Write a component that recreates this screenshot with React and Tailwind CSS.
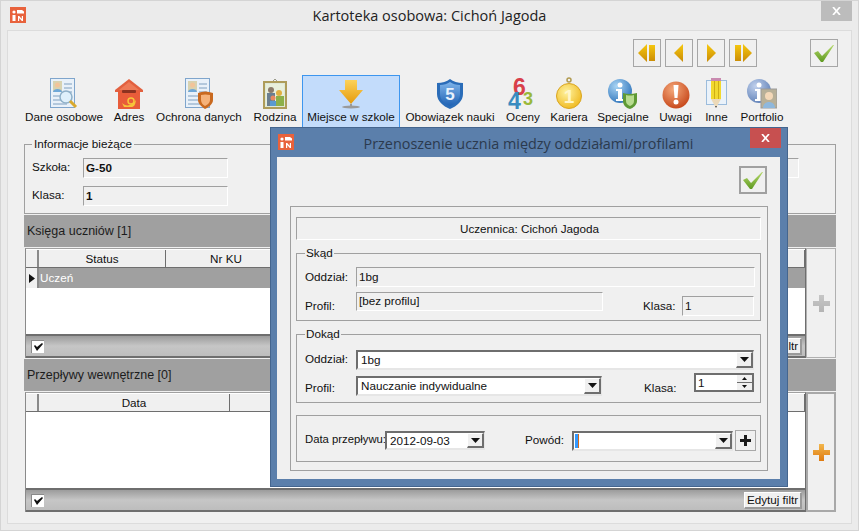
const AppIcon = () => (
  <svg width="16" height="16" viewBox="0 0 16 16" className="shrink-0">
    <rect width="16" height="16" fill="#e8623c" />
    <circle cx="4" cy="5" r="1.6" fill="#fff" />
    <rect x="2.5" y="8" width="3" height="6" fill="#fff" />
    <path d="M7 3h5l2 1.5v2H7z" fill="#fff" />
    <path d="M8 9h1.2l2.6 3V9H13v5h-1.2L9.2 11v3H8z" fill="#fff" />
  </svg>
);

const Caret = () => (
  <svg width="9" height="5" viewBox="0 0 9 5"><path d="M0 0h9L4.500 5z" fill="#111" /></svg>
);

const Check = ({ id }) => (
  <svg width="20" height="17" viewBox="0 0 20 17">
    <defs>
      <linearGradient id={id} x1="0" y1="0" x2="0" y2="1">
        <stop offset="0" stopColor="#b5d96a" />
        <stop offset="1" stopColor="#5f9a22" />
      </linearGradient>
    </defs>
    <path d="M0 8l4-2 4 5L19 0h1L9 17H7z" fill={`url(#${id})`} />
  </svg>
);

const Nav = ({ dir }) => (
  <button className="w-[28px] h-[28px] border border-[#a6a6a6] flex items-center justify-center">
    <svg width="18" height="18" viewBox="0 0 18 18">
      <defs>
        <linearGradient id={`nav${dir}`} x1="0" y1="0" x2="0" y2="1">
          <stop offset="0" stopColor="#f7c90f" />
          <stop offset="1" stopColor="#c98a05" />
        </linearGradient>
      </defs>
      {dir === "first" && <path d="M0 9l9-9v18zM11 1h6v16h-6z" fill="url(#navfirst)" />}
      {dir === "prev" && <path d="M4 9l9-9v18z" fill="url(#navprev)" />}
      {dir === "next" && <path d="M5 0l9 9-9 9z" fill="url(#navnext)" />}
      {dir === "last" && <path d="M1 1h6v16H1zM9 0l9 9-9 9z" fill="url(#navlast)" />}
    </svg>
  </button>
);

const Card = () => (
  <g>
    <rect x="0.500" y="0.500" width="24" height="29" fill="#e9f1f9" stroke="#7fa5cc" />
    <rect x="3" y="3" width="9" height="11" fill="#d8d2b0" />
    <circle cx="7.500" cy="7" r="2.500" fill="#f2c49a" />
    <path d="M3 14c0-4 9-4 9 0z" fill="#6fa8d8" />
    <path d="M14 6h8M14 10h8M14 14h8M3 18h19M3 22h14M3 26h14" stroke="#7f9fbf" />
  </g>
);

const DaneIcon = () => (
  <svg width="28" height="31" viewBox="0 0 28 31">
    <Card />
    <circle cx="16" cy="19" r="6" fill="#dff0fb" stroke="#8fb0c8" strokeWidth="1.500" />
    <path d="M20 23l6 6" stroke="#d9a92e" strokeWidth="3" />
  </svg>
);

const AdresIcon = () => (
  <svg width="28" height="30" viewBox="0 0 28 30">
    <path d="M14 0L28 11v2H0v-2z" fill="#e2603f" />
    <path d="M14 3L24 11H4z" fill="#ee7a57" />
    <rect x="3" y="12" width="22" height="18" fill="#e85c3a" />
    <rect x="7" y="11" width="14" height="3" rx="1" fill="#8c3220" />
    <path d="M7 24c4 4 10 3 14-3-1 6-2 7-5 7H9z" fill="#f7c53a" />
    <circle cx="16" cy="22" r="3" fill="none" stroke="#f7c53a" strokeWidth="1.500" />
  </svg>
);

const OchronaIcon = () => (
  <svg width="29" height="31" viewBox="0 0 29 31">
    <Card />
    <path d="M13 15q7-3 15 0v7c0 4-4 7-8 9-3-2-7-5-7-9z" fill="#c9691f" />
    <path d="M16 17q4-1 9 0v5c0 3-3 5-5 6-2-1-4-3-4-6z" fill="#f5b27a" />
  </svg>
);

const RodzinaIcon = () => (
  <svg width="24" height="31" viewBox="0 0 24 31">
    <path d="M9 4l3-3 3 3" fill="none" stroke="#9a9a8a" />
    <rect x="1" y="4" width="22" height="26" fill="#dfe8d5" stroke="#ae9c5a" strokeWidth="2" />
    <rect x="3" y="6" width="18" height="22" fill="#e8efdc" />
    <circle cx="8" cy="12" r="3" fill="#8b7a6a" />
    <rect x="4" y="15" width="8" height="13" fill="#6b7f90" />
    <circle cx="16" cy="15" r="3" fill="#e0b040" />
    <rect x="13" y="18" width="8" height="10" fill="#8cb04a" />
    <circle cx="10" cy="20" r="2.500" fill="#e88a60" />
    <rect x="7" y="23" width="6" height="5" fill="#5a9ad0" />
  </svg>
);

const ArrowIcon = () => (
  <svg width="24" height="29" viewBox="0 0 24 29">
    <defs>
      <linearGradient id="arrowG" x1="0" y1="0" x2="0" y2="1">
        <stop offset="0" stopColor="#fcd25a" />
        <stop offset="1" stopColor="#e59a0c" />
      </linearGradient>
    </defs>
    <path d="M6 0h12v10h6L12 24 0 10h6z" fill="url(#arrowG)" />
    <path d="M11 24h2v2h-2z" fill="#9a9a9a" />
    <ellipse cx="12" cy="27" rx="9" ry="1.500" fill="#9a9a9a" />
  </svg>
);

const ShieldIcon = () => (
  <svg width="26" height="30" viewBox="0 0 26 30">
    <defs>
      <linearGradient id="shieldG" x1="0" y1="0" x2="0" y2="1">
        <stop offset="0" stopColor="#7fb4ea" />
        <stop offset="1" stopColor="#1f62b4" />
      </linearGradient>
    </defs>
    <path d="M13 0q5 4 13 4v11c0 7-6 12-13 15C6 27 0 22 0 15V4q8 0 13-4z" fill="#2a6cb8" />
    <path d="M13 3q4 3 10 3v9c0 6-5 10-10 12C8 25 3 21 3 15V6q6 0 10-3z" fill="url(#shieldG)" />
    <text x="13" y="21" textAnchor="middle" className="font-['Liberation_Sans',sans-serif] font-bold text-[17px]" fill="#e8f2fc">5</text>
  </svg>
);

const OcenyIcon = () => (
  <svg width="30" height="31" viewBox="0 0 30 31" className="font-['Liberation_Sans',sans-serif] font-bold overflow-visible">
    <text x="5" y="17" className="text-[23px]" fill="#d8404a">6</text>
    <text x="0" y="31" className="text-[23px]" fill="#3a8cc0">4</text>
    <text x="15" y="27" className="text-[18px]" fill="#9ab83a">3</text>
  </svg>
);

const KarieraIcon = () => (
  <svg width="26" height="32" viewBox="0 0 26 32">
    <defs>
      <radialGradient id="medalG" cx="0.400" cy="0.350" r="0.750">
        <stop offset="0" stopColor="#fff3a0" />
        <stop offset="1" stopColor="#eeb414" />
      </radialGradient>
    </defs>
    <circle cx="13" cy="3" r="2" fill="none" stroke="#b09a50" strokeWidth="1.500" />
    <circle cx="13" cy="19" r="12.500" fill="url(#medalG)" stroke="#d9a520" />
    <text x="13" y="26" textAnchor="middle" className="font-['Liberation_Sans',sans-serif] font-bold text-[19px]" fill="#fff6c8">1</text>
  </svg>
);

const InfoBall = ({ id, a, b }) => (
  <g>
    <defs>
      <radialGradient id={id} cx="0.350" cy="0.300" r="0.800">
        <stop offset="0" stopColor={a} />
        <stop offset="1" stopColor={b} />
      </radialGradient>
    </defs>
    <circle cx="12" cy="12" r="12" fill={`url(#${id})`} />
    <circle cx="12" cy="6" r="2.500" fill="#fff" />
    <path d="M8 10h6v10h2v2H8v-2h2v-8H8z" fill="#fff" />
  </g>
);

const SpecjalneIcon = () => (
  <svg width="30" height="30" viewBox="0 0 30 30">
    <InfoBall id="specG" a="#a8d4f4" b="#2a70b8" />
    <path d="M15 14q6 2 14 0v8c0 4-4 7-7 8-4-1-7-4-7-8z" fill="#5f9a35" />
    <path d="M18 16q4 1 8 0v6c0 3-2 4-4 5-2-1-4-2-4-5z" fill="#b8dc90" />
  </svg>
);

const UwagiIcon = () => (
  <svg width="28" height="28" viewBox="0 0 28 28">
    <defs>
      <radialGradient id="uwagiG" cx="0.400" cy="0.300" r="0.800">
        <stop offset="0" stopColor="#f4a87a" />
        <stop offset="1" stopColor="#c23d10" />
      </radialGradient>
    </defs>
    <circle cx="14" cy="14" r="13.500" fill="url(#uwagiG)" />
    <path d="M11.500 4h5l-1 13h-3z" fill="#fff" />
    <circle cx="14" cy="21" r="2.500" fill="#fff" />
  </svg>
);

const InneIcon = () => (
  <svg width="21" height="31" viewBox="0 0 21 31">
    <rect x="0.500" y="2.500" width="20" height="24" fill="#eaf2fa" stroke="#9cbcdc" />
    <rect x="5" y="0" width="10" height="3" fill="#c98ab0" />
    <rect x="5" y="3" width="10" height="18" fill="#f2d92e" />
    <path d="M8 3h1v18H8zM12 3h1v18h-1z" fill="#cfae14" />
    <path d="M5 21h10l-5 9z" fill="#ecd9b8" />
    <path d="M9 28h2l-1 2z" fill="#444" />
  </svg>
);

const PortfolioIcon = () => (
  <svg width="30" height="30" viewBox="0 0 30 30">
    <InfoBall id="portG" a="#c0d0ec" b="#5a7cb4" />
    <rect x="14" y="10" width="16" height="19" fill="#b8b098" stroke="#9a9a9a" />
    <circle cx="22" cy="17" r="4" fill="#f4d8b8" />
    <path d="M16 29c0-8 12-8 12 0z" fill="#8fb8dc" />
  </svg>
);

const tools = [
  { label: "Dane osobowe", w: "w-[88px]", icon: <DaneIcon /> },
  { label: "Adres", w: "w-[40px]", icon: <AdresIcon /> },
  { label: "Ochrona danych", w: "w-[98px]", icon: <OchronaIcon /> },
  { label: "Rodzina", w: "w-[52px]", icon: <RodzinaIcon /> },
  { label: "Miejsce w szkole", w: "w-[98px]", icon: <ArrowIcon />, active: true },
  { label: "Obowiązek nauki", w: "w-[98px]", icon: <ShieldIcon /> },
  { label: "Oceny", w: "w-[46px]", icon: <OcenyIcon /> },
  { label: "Kariera", w: "w-[44px]", icon: <KarieraIcon /> },
  { label: "Specjalne", w: "w-[62px]", icon: <SpecjalneIcon /> },
  { label: "Uwagi", w: "w-[41px]", icon: <UwagiIcon /> },
  { label: "Inne", w: "w-[39px]", icon: <InneIcon /> },
  { label: "Portfolio", w: "w-[50px]", icon: <PortfolioIcon /> },
];

const Sunken = ({ className = "", children }) => (
  <div className={`border border-t-[#a0a0a0] border-l-[#a0a0a0] border-r-white border-b-white flex items-center pl-[2px] ${className}`}>
    {children}
  </div>
);

const Group = ({ title, className = "", children }) => (
  <fieldset className={`border border-[#a0a0a0] ${className}`}>
    <legend className="px-[1px] leading-[14px]">{title}</legend>
    {children}
  </fieldset>
);

const DropButton = ({ className = "" }) => (
  <span className={`bg-[#f0f0f0] border-t border-t-white border-l border-l-white border-r-2 border-r-[#6e6e6e] border-b-2 border-b-[#6e6e6e] flex items-center justify-center ${className}`}>
    <Caret />
  </span>
);

const Combo = ({ value, className = "" }) => (
  <div className={`bg-white border-t-2 border-l-2 border-t-[#6e6e6e] border-l-[#6e6e6e] border-r border-b-2 border-r-[#e6e6e6] border-b-[#e6e6e6] flex items-stretch ${className}`}>
    <span className="flex-1 pl-[3px] leading-[16px] flex items-center">{value}</span>
    <DropButton className="w-[17px]" />
  </div>
);

const GridCheck = () => (
  <span className="w-[13px] h-[13px] bg-white border-t border-l border-t-[#8a8a8a] border-l-[#8a8a8a] flex items-center justify-center">
    <svg width="9" height="8" viewBox="0 0 9 8"><path d="M0 3l1-1 2 2 5-4 1 1-6 7z" fill="#111" /></svg>
  </span>
);

const GridHead = ({ children }) => (
  <div className="flex h-[19px] bg-[#f0f0f0] border-b border-b-[#6e6e6e] shrink-0 border-t border-t-white">
    <span className="w-[13px] border-r-2 border-r-[#8a8a8a] shrink-0" />
    {children}
  </div>
);

const Grid = ({ head, row, filterText = "Edytuj filtr" }) => (
  <div className="w-[782px] ml-px border-l border-l-[#8a8a8a] border-r border-r-[#6e6e6e] flex flex-col h-full border-t border-t-[#a0a0a0]">
    <GridHead>{head}</GridHead>
    <div className="flex-1 bg-white">{row}</div>
    <div className="h-[24px] shrink-0 border-t-2 border-b-2 border-t-[#6e6e6e] border-b-[#6e6e6e] bg-linear-to-b from-[#9c9c9c] via-[#c6c6c6] to-[#bdbdbd] flex items-center justify-between pl-[5px] pr-[3px]">
      <GridCheck />
      <button className="w-[58px] h-[17px] bg-[#f0f0f0] border-t border-l border-t-white border-l-white border-r-2 border-b-2 border-r-[#9a9a9a] border-b-[#9a9a9a] leading-[13px] whitespace-nowrap">
        {filterText}
      </button>
    </div>
  </div>
);

const AddButton = ({ className = "", children }) => (
  <button className={`w-[30px] flex items-center justify-center ${className}`}>{children}</button>
);

const PlusIcon = ({ from, to, id }) => (
  <svg width="17" height="17" viewBox="0 0 17 17">
    <defs>
      <linearGradient id={id} x1="0" y1="0" x2="0" y2="1">
        <stop offset="0" stopColor={from} />
        <stop offset="1" stopColor={to} />
      </linearGradient>
    </defs>
    <path d="M6 0h5v6h6v5h-6v6H6v-6H0V6h6z" fill={`url(#${id})`} />
  </svg>
);

const SectionHeader = ({ children }) => (
  <div className="mt-px ml-[16px] w-[812px] h-[32px] bg-[#a0a0a0] flex items-center pl-[3px] text-[12.500px] text-[#1c1c1c]">
    {children}
  </div>
);

const Dialog = () => (
  <div className="absolute left-[269px] top-[126px] w-[518px] h-[360px] bg-[#5b7fab] border border-[#44658e] flex flex-col">
    <div className="h-[29px] shrink-0 flex items-start pl-[7px] pt-[1px] relative">
      <span className="mt-[5px]"><AppIcon /></span>
      <span className="flex-1 text-center font-['Open_Sans',sans-serif] text-[14.400px] leading-[29px] text-[#2b3a4e] pr-[24px] pl-0">
        Przenoszenie ucznia między oddziałami/profilami
      </span>
      <span className="absolute right-[6px] top-0 w-[31px] h-[20px] bg-[#c75050] flex items-center justify-center">
        <svg width="9" height="8" viewBox="0 0 9 8"><path d="M1 0l7 8M8 0L1 8" stroke="#fff" strokeWidth="1.700" /></svg>
      </span>
    </div>
    <div className="mx-[6px] w-[503px] h-[322px] bg-[#f0f0f0] flex flex-col">
      <div className="flex justify-end pt-[9px] pr-[13px]">
        <button className="w-[28px] h-[28px] border-2 border-[#a0a0a0] flex items-center justify-center">
          <Check id="checkDialog" />
        </button>
      </div>
      <div className="mt-[12px] ml-[13px] w-[478px] h-[265px] border border-[#a0a0a0] pl-[5px] pt-[10px]">
        <Sunken className="w-[465px] h-[23px] justify-center">Uczennica: Cichoń Jagoda</Sunken>

        <Group title="Skąd" className="mt-[6px] w-[465px] h-[75px] pl-[8px]">
          <div className="pt-[7px] flex items-center">
            <span className="w-[51px] shrink-0">Oddział:</span>
            <Sunken className="w-[399px] h-[20px]">1bg</Sunken>
          </div>
          <div className="mt-[5px] flex items-start">
            <span className="w-[51px] shrink-0 mt-[5px]">Profil:</span>
            <Sunken className="w-[247px] h-[19px] !items-start leading-[16px]">[bez profilu]</Sunken>
            <span className="ml-[40px] w-[39px] mt-[5px]">Klasa:</span>
            <Sunken className="mt-[4px] w-[72px] h-[20px]">1</Sunken>
          </div>
        </Group>

        <Group title="Dokąd" className="mt-[6px] w-[465px] h-[76px] pl-[8px]">
          <div className="pt-[9px] flex items-center">
            <span className="w-[51px] shrink-0 -mt-[2px]">Oddział:</span>
            <Combo value="1bg" className="w-[398px] h-[20px]" />
          </div>
          <div className="mt-[3px] flex items-start">
            <span className="w-[51px] shrink-0 mt-[6px]">Profil:</span>
            <Combo value="Nauczanie indywidualne" className="mt-[3px] w-[246px] h-[20px]" />
            <span className="ml-[42px] w-[50px] mt-[6px]">Klasa:</span>
            <div className="w-[60px] h-[19px] bg-white border-2 border-[#6e6e6e] flex items-stretch">
              <span className="flex-1 pl-[2px] leading-[15px]">1</span>
              <span className="w-[15px] flex flex-col bg-[#f0f0f0]">
                <span className="flex-1 flex items-center justify-center border-b border-b-[#6e6e6e]">
                  <svg width="5" height="3" viewBox="0 0 5 3"><path d="M2.500 0L5 3H0z" fill="#111" /></svg>
                </span>
                <span className="flex-1 flex items-center justify-center">
                  <svg width="5" height="3" viewBox="0 0 5 3"><path d="M0 0h5L2.500 3z" fill="#111" /></svg>
                </span>
              </span>
            </div>
          </div>
        </Group>

        <div className="mt-[12px] w-[465px] h-[47px] border border-[#a0a0a0] pl-[8px] pt-[15px] flex items-start">
          <span className="w-[80px] shrink-0 whitespace-nowrap text-[11.300px]">Data przepływu:</span>
          <Combo value="2012-09-03" className="w-[100px] h-[19px]" />
          <span className="ml-[40px] w-[47px] shrink-0">Powód:</span>
          <div className="w-[161px] h-[20px] bg-white border-t-2 border-l-2 border-t-[#6e6e6e] border-l-[#6e6e6e] border-r border-b-2 border-r-[#e6e6e6] border-b-[#e6e6e6] flex items-stretch">
            <span className="flex-1 pl-[1px] flex items-center">
              <span className="w-[4px] h-[14px] bg-[#3399ff] border-r border-r-[#d2691e]" />
            </span>
            <DropButton className="w-[17px]" />
          </div>
          <button className="ml-[2px] -mt-[1px] w-[21px] h-[21px] border border-[#a8a8a8] flex items-center justify-center">
            <svg width="11" height="11" viewBox="0 0 11 11"><path d="M4 0h3v4h4v3H7v4H4V7H0V4h4z" fill="#1a1a1a" /></svg>
          </button>
        </div>
      </div>
    </div>
  </div>
);

const App = () => (
  <div className="w-[859px] h-[531px] relative overflow-hidden bg-[#ebebeb] border border-[#d4d4d4] font-['Liberation_Sans',sans-serif] text-[11.700px] text-[#111]">
    <div className="h-[29px] flex items-start relative">
      <span className="ml-[9px] mt-[6px]"><AppIcon /></span>
      <span className="absolute inset-x-0 top-0 text-center font-['Open_Sans',sans-serif] text-[14.500px] leading-[30px] text-[#222]">
        Kartoteka osobowa: Cichoń Jagoda
      </span>
      <span className="absolute right-[6px] top-0 w-[31px] h-[20px] bg-[#bcbcbc] flex items-center justify-center">
        <svg width="9" height="8" viewBox="0 0 9 8"><path d="M1 0l7 8M8 0L1 8" stroke="#fff" strokeWidth="1.700" /></svg>
      </span>
    </div>

    <div className="ml-[6px] w-[845px] h-[494px] border border-[#dcdcdc] bg-[#f0f0f0]">
      <div className="flex items-center justify-end gap-[4px] pt-[8px] pr-[13px]">
        <Nav dir="first" />
        <Nav dir="prev" />
        <Nav dir="next" />
        <Nav dir="last" />
        <button className="ml-[49px] w-[28px] h-[28px] border border-[#a6a6a6] flex items-center justify-center">
          <Check id="checkMain" />
        </button>
      </div>

      <div className="mt-[8px] pl-[12px] h-[55px] flex gap-px">
        {tools.map((t) => (
          <div
            key={t.label}
            className={`${t.w} shrink-0 flex flex-col items-center ${t.active ? "bg-[#c3dcfb] border border-[#3d96ef]" : "border border-transparent"}`}
          >
            <div className="h-[34px] flex items-end justify-center pb-px">{t.icon}</div>
            <span className="whitespace-nowrap leading-[14px]">{t.label}</span>
          </div>
        ))}
      </div>

      <fieldset className="mt-[7px] ml-[16px] w-[812px] h-[77px] border border-[#a0a0a0] pl-[7px] pr-[36px]">
        <legend className="px-[2px] leading-[14px]">Informacje bieżące</legend>
        <div className="pt-[7px] flex items-center">
          <span className="w-[51px] shrink-0 -mt-[2px]">Szkoła:</span>
          <Sunken className="w-[145px] h-[20px] font-bold">G-50</Sunken>
          <Sunken className="ml-auto w-[200px] h-[20px]" />
        </div>
        <div className="mt-[8px] flex items-center">
          <span className="w-[51px] shrink-0 -mt-[2px]">Klasa:</span>
          <Sunken className="w-[145px] h-[20px] font-bold">1</Sunken>
        </div>
      </fieldset>

      <SectionHeader>Księga uczniów [1]</SectionHeader>
      <div className="mt-px ml-[16px] w-[812px] h-[110px] flex">
        <Grid
          head={
            <>
              <span className="w-[127px] text-center border-r border-r-[#6e6e6e] leading-[17px]">Status</span>
              <span className="w-[120px] text-center leading-[17px]">Nr KU</span>
              <span className="ml-auto w-[20px] border-r border-r-[#6e6e6e]" />
            </>
          }
          row={
            <div className="h-[20px] bg-[#a0a0a0] flex items-center">
              <span className="w-[13px] h-full bg-[#f0f0f0] border-r-2 border-r-[#8a8a8a] flex items-center justify-center shrink-0">
                <svg width="6" height="9" viewBox="0 0 6 9"><path d="M0 0l6 4.500L0 9z" fill="#111" /></svg>
              </span>
              <span className="pl-[1px] text-white">Uczeń</span>
            </div>
          }
        />
        <AddButton className="border border-[#b0b0b0]">
          <PlusIcon id="plusGray" from="#c6c6c6" to="#b4b4b4" />
        </AddButton>
      </div>

      <SectionHeader>Przepływy wewnętrzne [0]</SectionHeader>
      <div className="mt-px ml-[16px] w-[812px] h-[120px] flex">
        <Grid
          head={
            <>
              <span className="w-[191px] text-center border-r border-r-[#6e6e6e] leading-[17px]">Data</span>
              <span className="ml-auto w-[20px] border-r border-r-[#6e6e6e]" />
            </>
          }
        />
        <AddButton className="border-2 border-[#a8a8a8]">
          <PlusIcon id="plusOrange" from="#f2b64c" to="#df7a10" />
        </AddButton>
      </div>
    </div>

    <Dialog />
  </div>
);

export default App;
